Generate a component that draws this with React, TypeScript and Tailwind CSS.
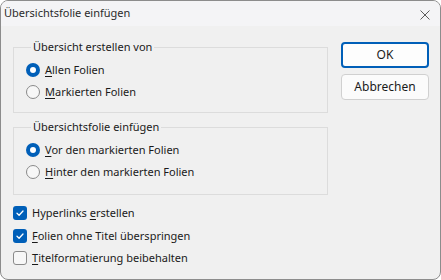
type RadioRowProps = {
    checked?: boolean;
    accel: string;
    rest: string;
};

// Windows 11 style radio: blue ring with white dot when selected.
const RadioRow = ({ checked = false, accel, rest }: RadioRowProps) => (
    <div className="flex h-[22px] items-center gap-[5px]">
        {checked ? (
            <span className="flex h-[14px] w-[14px] items-center justify-center rounded-full bg-[#005fb8]">
                <span className="h-[6px] w-[6px] rounded-full bg-white" />
            </span>
        ) : (
            <span className="h-[14px] w-[14px] rounded-full border border-[#8a8a8a] bg-[#f7f7f7]" />
        )}
        <span>
            <span className="underline underline-offset-2">{accel}</span>
            {rest}
        </span>
    </div>
);

type CheckRowProps = {
    checked?: boolean;
    before?: string;
    accel: string;
    rest: string;
};

const CheckRow = ({ checked = false, before = "", accel, rest }: CheckRowProps) => (
    <div className="flex h-[22.5px] items-center gap-[5px]">
        {checked ? (
            <span className="flex h-[14px] w-[14px] items-center justify-center rounded-[3px] bg-[#005fb8]">
                <svg width="10" height="10" viewBox="0 0 10 10" fill="none">
                    <path d="M2 5.2 L4.1 7.2 L8 3" stroke="white" strokeWidth="1.3" strokeLinecap="round" strokeLinejoin="round" />
                </svg>
            </span>
        ) : (
            <span className="h-[14px] w-[14px] rounded-[3px] border border-[#8a8a8a] bg-[#f7f7f7]" />
        )}
        <span>
            {before}
            <span className="underline underline-offset-2">{accel}</span>
            {rest}
        </span>
    </div>
);

type GroupProps = {
    title: string;
    children: React.ReactNode;
    className?: string;
};

// Classic group box: the caption sits on the top border line.
const Group = ({ title, children, className = "" }: GroupProps) => (
    <fieldset className={`border border-[#dcdcdc] px-[12px] ${className}`}>
        <legend className="ml-[5px] px-[2px] leading-[16px]">{title}</legend>
        <div className="mt-[4px] flex flex-col">{children}</div>
    </fieldset>
);

export default function App() {
    return (
        <div
            className="flex h-[280px] w-[441px] flex-col overflow-hidden rounded-[8px] border border-[#8c8c8c] bg-[#f0f0f0] text-[11px] text-[#1a1a1a]"
            style={{ fontFamily: '"Noto Sans", "Liberation Sans", sans-serif' }}
        >
            <div className="flex h-[25px] shrink-0 items-center justify-between bg-[#f4f4f6] pl-[3px] pr-[10px]">
                <span className="text-[#2b2b2b]">Übersichtsfolie einfügen</span>
                <svg width="10" height="10" viewBox="0 0 10 10" className="mt-[2px]">
                    <path d="M0.5 0.5 L9.5 9.5 M9.5 0.5 L0.5 9.5" stroke="#5c5c5c" strokeWidth="1" />
                </svg>
            </div>

            <div className="flex flex-1 gap-[13px] pl-[12px] pr-[11px] pt-[13px]">
                <div className="flex w-[315px] flex-col">
                    <Group title="Übersicht erstellen von" className="pb-[9px]">
                        <RadioRow checked accel="A" rest="llen Folien" />
                        <RadioRow accel="M" rest="arkierten Folien" />
                    </Group>
                    <Group title="Übersichtsfolie einfügen" className="mt-[6px] pb-[11px]">
                        <RadioRow checked accel="V" rest="or den markierten Folien" />
                        <RadioRow accel="H" rest="inter den markierten Folien" />
                    </Group>
                    <div className="mt-[7px] flex flex-col">
                        <CheckRow checked before="Hyperlinks " accel="e" rest="rstellen" />
                        <CheckRow checked accel="F" rest="olien ohne Titel überspringen" />
                        <CheckRow accel="T" rest="itelformatierung beibehalten" />
                    </div>
                </div>

                <div className="flex w-[88px] flex-col gap-[6px] pt-[3px]">
                    <button
                        type="button"
                        className="h-[26px] rounded-[4px] border-2 border-[#005fb8] bg-[#fdfdfd] text-[12px] text-[#1a1a1a]"
                    >
                        OK
                    </button>
                    <button
                        type="button"
                        className="h-[26px] rounded-[4px] border border-[#d0d0d0] bg-[#fbfbfb] text-[12px] text-[#1a1a1a]"
                    >
                        Abbrechen
                    </button>
                </div>
            </div>
        </div>
    );
}
